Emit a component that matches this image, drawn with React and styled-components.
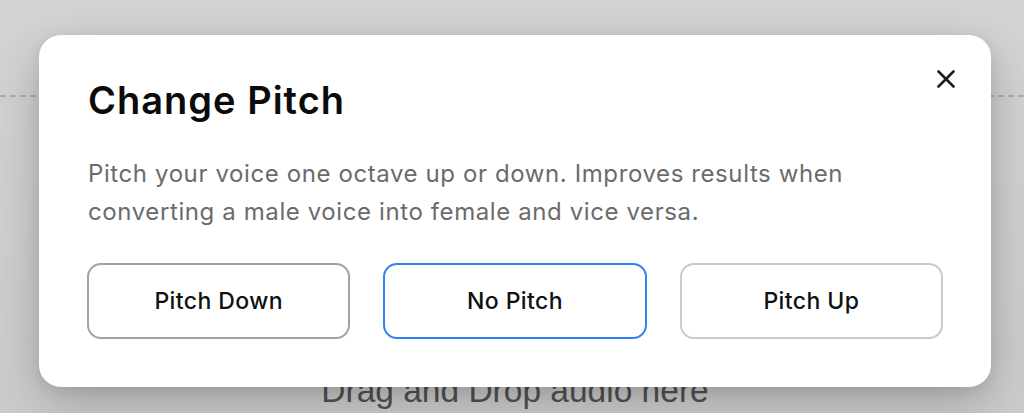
import React from "react";
import styled, { createGlobalStyle } from "styled-components";

const Global = createGlobalStyle`
  html, body { margin: 0; padding: 0; background: #ffffff; overflow: hidden; }
  #root { width: 1024px; height: 413px; position: relative; overflow: hidden; }
  * { box-sizing: border-box; }
`;

const Page = styled.div`
  width: 1024px;
  height: 413px;
  padding-top: 95px;
  background: #ffffff;
`;

const DropZone = styled.div`
  margin: 0 -20px;
  border-top: 2px dashed #d2d2d2;
  padding-top: 276px;
  display: flex;
  justify-content: center;
`;

const DropText = styled.div`
  font-family: "Liberation Sans", Arial, sans-serif;
  font-size: 33.5px;
  line-height: 36px;
  color: #666666;
  padding-left: 6px;
`;

const Overlay = styled.div`
  position: absolute;
  inset: 0;
  background: linear-gradient(180deg, rgba(0,0,0,0.17) 0%, rgba(0,0,0,0.2) 100%);
`;

const Modal = styled.div`
  position: absolute;
  left: 39px;
  top: 35px;
  width: 952px;
  background: #ffffff;
  border-radius: 22px;
  padding: 42px 48px 48px 49px;
  box-shadow: 0 16px 50px rgba(0, 0, 0, 0.22), 0 4px 14px rgba(0, 0, 0, 0.08);
  font-family: Inter, "Noto Sans", sans-serif;
`;

const Title = styled.h2`
  margin: 0;
  font-size: 38px;
  line-height: 46px;
  font-weight: 600;
  color: #0b0b0b;
  letter-spacing: 1px;
`;

const Description = styled.p`
  margin: 32px 0 0;
  font-size: 24px;
  line-height: 38px;
  font-weight: 400;
  color: #6b6b6b;
  letter-spacing: 0.6px;
  max-width: 790px;
`;

const Options = styled.div`
  margin-top: 32px;
  display: grid;
  grid-template-columns: repeat(3, 1fr);
  gap: 33px;
  margin-left: -1px;
`;

const OptionButton = styled.button`
  height: 76px;
  border-radius: 14px;
  border: 2px solid ${(p) => p.$border};
  background: #ffffff;
  font-family: Inter, "Noto Sans", sans-serif;
  font-size: 23px;
  font-weight: 500;
  letter-spacing: 0.4px;
  color: #111111;
  cursor: pointer;
`;

const CloseButton = styled.button`
  position: absolute;
  top: 32px;
  right: 33px;
  width: 24px;
  height: 24px;
  padding: 0;
  border: none;
  background: transparent;
  display: flex;
  align-items: center;
  justify-content: center;
  cursor: pointer;
`;

const options = [
  { label: "Pitch Down", border: "#a3a3a3" },
  { label: "No Pitch", border: "#3083f7" },
  { label: "Pitch Up", border: "#cacaca" },
];

export default function App() {
  return (
    <>
      <Global />
      <Page>
        <DropZone>
          <DropText>Drag and Drop audio here</DropText>
        </DropZone>
      </Page>
      <Overlay />
      <Modal>
        <CloseButton aria-label="Close">
          <svg width="18" height="18" viewBox="0 0 18 18">
            <path d="M1.5 1.5 L16.5 16.5 M16.5 1.5 L1.5 16.5" stroke="#1e1e1e" strokeWidth="2.6" strokeLinecap="round" />
          </svg>
        </CloseButton>
        <Title>Change Pitch</Title>
        <Description>
          Pitch your voice one octave up or down. Improves results when converting a male voice into female and vice versa.
        </Description>
        <Options>
          {options.map((o) => (
            <OptionButton key={o.label} $border={o.border}>
              {o.label}
            </OptionButton>
          ))}
        </Options>
      </Modal>
    </>
  );
}
